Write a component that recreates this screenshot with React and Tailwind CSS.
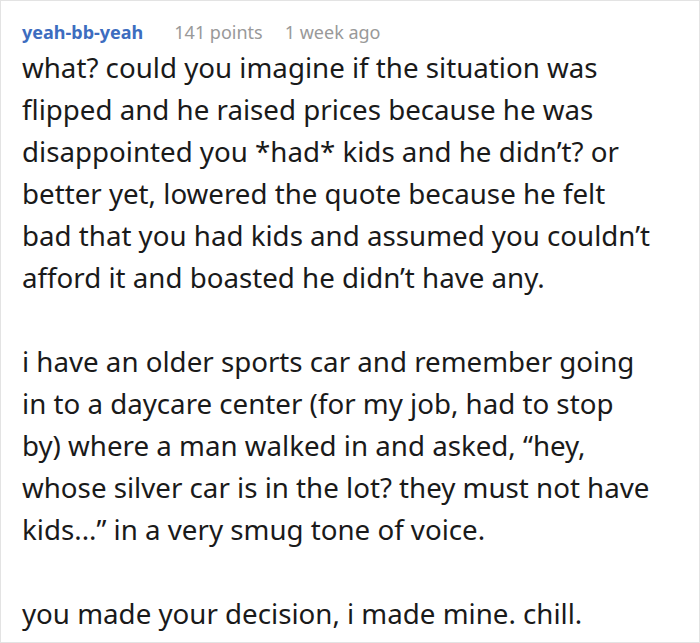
export default function App() {
  return (
    <div className="w-[700px] h-[643px] border border-[#e3e3e3] bg-white pl-[21px] pr-[40px] pt-[17px] font-['Noto_Sans',sans-serif] text-[#1a1a1a]">
      <div className="flex items-baseline text-[18px] leading-[28px]">
        <span className="font-bold text-[#3d6dbf]">yeah-bb-yeah</span>
        <span className="ml-[31px] text-[#999999]">141 points</span>
        <span className="ml-[22px] text-[#999999]">1 week ago</span>
      </div>
      <div className="mt-[0px] text-[27.7px] leading-[42px]">
        <p>what? could you imagine if the situation was flipped and he raised prices because he was disappointed you *had* kids and he didn’t? or better yet, lowered the quote because he felt bad that you had kids and assumed you couldn’t afford it and boasted he didn’t have any.</p>
        <p className="mt-[42px]">i have an older sports car and remember going in to a daycare center (for my job, had to stop by) where a man walked in and asked, “hey, whose silver car is in the lot? they must not have kids...” in a very smug tone of voice.</p>
        <p className="mt-[42px]">you made your decision, i made mine. chill.</p>
      </div>
    </div>
  );
}
